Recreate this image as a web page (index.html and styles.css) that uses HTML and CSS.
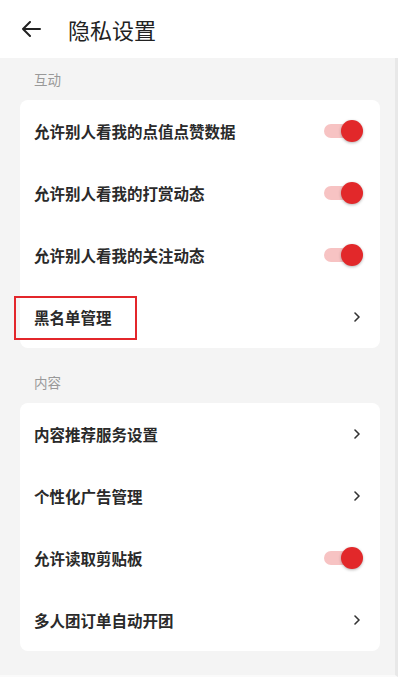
FILE: index.html
```html
<!DOCTYPE html>
<html lang="zh-CN">
<head>
    <meta charset="UTF-8">
    <meta name="viewport" content="width=device-width, initial-scale=1.0">
    <title>隐私设置</title>
    <link rel="stylesheet" href="styles.css">
</head>
<body>

    <div class="header">
        <svg class="back" width="20" height="16" viewBox="0 0 20 16">
            <path d="M19 8H2M9 1L2 8l7 7" fill="none" stroke="#222" stroke-width="2" stroke-linecap="round" stroke-linejoin="round"/>
        </svg>
        <span class="title">隐私设置</span>
    </div>

    <div class="page">
        <div class="section-label">互动</div>
        <div class="card">
            <div class="row">
                <span>允许别人看我的点值点赞数据</span>
                <span class="switch"><span class="knob"></span></span>
            </div>
            <div class="row">
                <span>允许别人看我的打赏动态</span>
                <span class="switch"><span class="knob"></span></span>
            </div>
            <div class="row">
                <span>允许别人看我的关注动态</span>
                <span class="switch"><span class="knob"></span></span>
            </div>
            <div class="row">
                <span>黑名单管理</span>
                <svg class="chevron" width="6" height="10" viewBox="0 0 6 10"><path d="M1 1l4 4-4 4" fill="none" stroke="#333" stroke-width="1.6" stroke-linecap="round" stroke-linejoin="round"/></svg>
                <span class="highlight"></span>
            </div>
        </div>

        <div class="section-label">内容</div>
        <div class="card">
            <div class="row">
                <span>内容推荐服务设置</span>
                <svg class="chevron" width="6" height="10" viewBox="0 0 6 10"><path d="M1 1l4 4-4 4" fill="none" stroke="#333" stroke-width="1.6" stroke-linecap="round" stroke-linejoin="round"/></svg>
            </div>
            <div class="row">
                <span>个性化广告管理</span>
                <svg class="chevron" width="6" height="10" viewBox="0 0 6 10"><path d="M1 1l4 4-4 4" fill="none" stroke="#333" stroke-width="1.6" stroke-linecap="round" stroke-linejoin="round"/></svg>
            </div>
            <div class="row">
                <span>允许读取剪贴板</span>
                <span class="switch"><span class="knob"></span></span>
            </div>
            <div class="row">
                <span>多人团订单自动开团</span>
                <svg class="chevron" width="6" height="10" viewBox="0 0 6 10"><path d="M1 1l4 4-4 4" fill="none" stroke="#333" stroke-width="1.6" stroke-linecap="round" stroke-linejoin="round"/></svg>
            </div>
        </div>
    </div>

</body>
</html>
```

FILE: styles.css
```css
body {
    font-family: "Noto Sans CJK SC", "Noto Sans", sans-serif;
    background-color: #fff;
    margin: 0;
    padding: 0;
    color: #222;
}
.header {
    height: 58px;
    display: flex;
    align-items: center;
    padding-left: 21px;
    background-color: #fff;
}
.back {
    margin-right: 27px;
}
.title {
    font-size: 22px;
    line-height: 30px;
}
.page {
    width: 398px;
    height: 619px;
    box-sizing: border-box;
    padding: 0 15px 0 20px;
    background-color: #f4f4f4;
    border-right: 3px solid #e8e8e8;
    border-bottom: 2px solid #fafafa;
}
.section-label {
    height: 42px;
    line-height: 42px;
    padding-left: 14px;
    font-size: 13.5px;
    color: #999;
}
.card {
    width: 360px;
    background-color: #fff;
    border-radius: 8px;
    margin-bottom: 13px;
}
.row {
    position: relative;
    height: 62px;
    display: flex;
    align-items: center;
    justify-content: space-between;
    padding: 0 17px 0 14px;
    font-size: 15.5px;
    font-weight: 700;
    color: #2a2a2a;
}
.chevron {
    margin-right: 3px;
}
.switch {
    position: relative;
    width: 32px;
    height: 14px;
    border-radius: 7px;
    background-color: #f7c3c3;
    margin-right: 7px;
}
.knob {
    position: absolute;
    top: -4px;
    left: 17px;
    width: 22px;
    height: 22px;
    border-radius: 50%;
    background-color: #e2282a;
    box-shadow: 0 1px 3px rgba(0, 0, 0, 0.3);
}
/* cadre rouge autour de l'entrée */
.highlight {
    position: absolute;
    left: -6px;
    top: 10px;
    width: 123px;
    height: 44px;
    border: 2px solid #e3262b;
    box-sizing: border-box;
}
```
